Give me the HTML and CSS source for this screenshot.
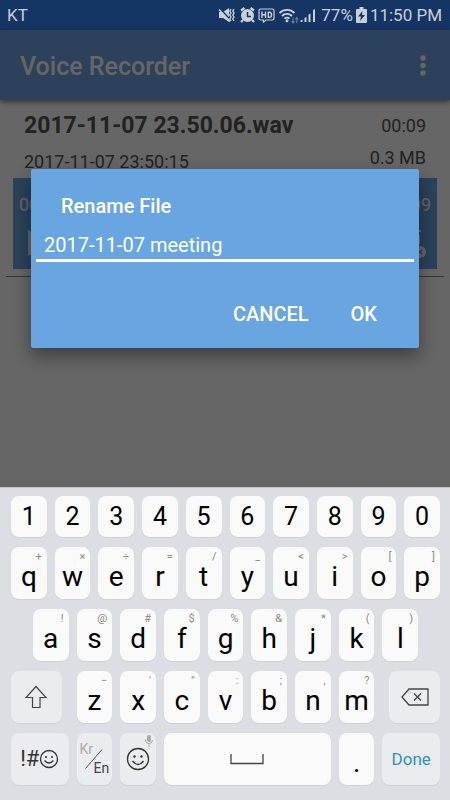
FILE: index.html
```html
<!DOCTYPE html>
<html lang="en">
<head>
<meta charset="utf-8">
<meta name="viewport" content="width=device-width, initial-scale=1">
<title>Voice Recorder</title>
<link rel="stylesheet" href="styles.css">
</head>
<body>
<div class="status">
  <span class="carrier">KT</span>
  <svg class="status-icons" width="102" height="20" viewBox="0 0 102 20" aria-hidden="true">
    <g fill="currentColor">
      <path d="M3 7h4l6-4v14l-6-4H3z"/>
      <circle cx="31.500" cy="10.500" r="6.500"/>
      <path d="M84.500 17v-1.500l2-1V17zM88.500 17v-4l2-1v5zM92.500 17V9.500l2-1V17zM97 17V5l2-1v13z"/>
    </g>
    <path d="M25 5.500l3.500-2.500M38 5.500L34.500 3M27 15l-2 2M36 15l2 2" stroke="currentColor" stroke-width="2.200"/>
    <path d="M4 3.500l11 12" stroke="#153564" stroke-width="1.500"/>
    <path d="M3 4.500l11 12" stroke="currentColor" stroke-width="1.500"/>
    <path d="M15 4l-1.200 2 1.200 2-1.200 2 1.200 2-1.200 2 1.200 2M18 4l-1.200 2 1.200 2-1.200 2 1.200 2-1.200 2 1.200 2" fill="none" stroke="currentColor" stroke-width="1.400"/>
    <path d="M31.500 7v4.500H35" fill="none" stroke="#153564" stroke-width="1.500"/>
    <g fill="none" stroke="currentColor" stroke-width="1.200">
      <path d="M44.500 4h12a1.500 1.500 0 0 1 1.500 1.500v8a1.500 1.500 0 0 1-1.500 1.500H50l-2.500 2v-2h-3a1.500 1.500 0 0 1-1.500-1.500v-8A1.500 1.500 0 0 1 44.500 4z"/>
      <path d="M46 6.500v6.500M49.500 6.500v6.500M46 9.700h3.500M52.300 7.200v5.200h1c3 0 3-5.200 0-5.200z" stroke-width="1.400"/>
      <path d="M63.500 8a10.500 10.500 0 0 1 15 0M66 11a7 7 0 0 1 10 0M68.500 13.700a3.500 3.500 0 0 1 5 0" stroke-width="1.900"/>
      <path d="M77 12.500v5M75.500 16l1.500 2 1.500-2M80.800 18v-5M79.300 14.500l1.500-2 1.500 2" opacity=".45"/>
    </g>
    <circle cx="71" cy="15.800" r="1.500" fill="currentColor"/>
  </svg>
  <span>77%</span>
  <svg class="battery" width="11" height="16" viewBox="0 0 11 16" aria-hidden="true">
    <path d="M3.500 0h4v2H10q1 0 1 1v12q0 1-1 1H1q-1 0-1-1V3q0-1 1-1h2.500z" fill="currentColor"/>
    <path d="M6.500 4L2 9.500h3L4 14l5-6H6z" fill="#153564"/>
  </svg>
  <span>11:50 PM</span>
</div>

<div class="app">
  <header class="toolbar">
    <h1>Voice Recorder</h1>
    <button class="more" type="button" aria-label="More options">
      <svg width="6" height="22" viewBox="0 0 6 22"><g fill="#fff"><circle cx="3" cy="3" r="2.700"/><circle cx="3" cy="10.500" r="2.700"/><circle cx="3" cy="18" r="2.700"/></g></svg>
    </button>
  </header>
  <main class="list">
    <article class="item">
      <div class="line"><h2>2017-11-07 23.50.06.wav</h2><span>00:09</span></div>
      <div class="line sub"><span class="date">2017-11-07 23:50:15</span><span>0.3 MB</span></div>
      <div class="player">
        <div class="times"><span>00:00</span><span>00:09</span></div>
        <div class="controls">
          <button type="button" aria-label="Play"><svg width="24" height="28" viewBox="0 0 24 28"><path d="M1 1l22 13L1 27z" fill="#fff"/></svg></button>
          <button type="button" aria-label="Delete"><svg width="30" height="30" viewBox="0 0 30 30"><path d="M4 2h21v2H4zM6 7h18v9l-6 5v6H6z" fill="#fff"/><circle cx="24" cy="24" r="6" fill="#fff"/><path d="M22 22l4 4M26 22l-4 4" stroke="#6ba5e1" stroke-width="1.500"/></svg></button>
        </div>
      </div>
    </article>
  </main>
  <div class="scrim">
    <form class="dialog" role="dialog" aria-labelledby="dialog-title">
      <label class="dialog-title" id="dialog-title" for="filename">Rename File</label>
      <input class="field" id="filename" type="text" value="2017-11-07 meeting">
      <div class="actions"><button type="button">CANCEL</button><button type="button">OK</button></div>
    </form>
  </div>
</div>

<div class="keyboard">
  <button class="key num" type="button">1</button><button class="key num" type="button">2</button><button class="key num" type="button">3</button><button class="key num" type="button">4</button><button class="key num" type="button">5</button><button class="key num" type="button">6</button><button class="key num" type="button">7</button><button class="key num" type="button">8</button><button class="key num" type="button">9</button><button class="key num" type="button">0</button>

  <button class="key" type="button"><small>+</small>q</button><button class="key" type="button"><small>×</small>w</button><button class="key" type="button"><small>÷</small>e</button><button class="key" type="button"><small>=</small>r</button><button class="key" type="button"><small>/</small>t</button><button class="key" type="button"><small>_</small>y</button><button class="key" type="button"><small>&lt;</small>u</button><button class="key" type="button"><small>&gt;</small>i</button><button class="key" type="button"><small>[</small>o</button><button class="key" type="button"><small>]</small>p</button>

  <button class="key home" type="button"><small>!</small>a</button><button class="key" type="button"><small>@</small>s</button><button class="key" type="button"><small>#</small>d</button><button class="key" type="button"><small>$</small>f</button><button class="key" type="button"><small>%</small>g</button><button class="key" type="button"><small>&amp;</small>h</button><button class="key" type="button"><small>*</small>j</button><button class="key" type="button"><small>(</small>k</button><button class="key" type="button"><small>)</small>l</button>

  <button class="key fn wide shift" type="button" aria-label="Shift">
    <svg width="22" height="24" viewBox="0 0 22 24"><path d="M11 1.500L21 12.500h-6v10H7.500v-10H1z" fill="none" stroke="#444" stroke-width="1.200"/></svg>
  </button>
  <button class="key" type="button"><small>−</small>z</button><button class="key" type="button"><small>'</small>x</button><button class="key" type="button"><small>"</small>c</button><button class="key" type="button"><small>:</small>v</button><button class="key" type="button"><small>;</small>b</button><button class="key" type="button"><small>,</small>n</button><button class="key" type="button"><small>?</small>m</button>
  <button class="key fn wide erase" type="button" aria-label="Backspace">
    <svg width="28" height="18" viewBox="0 0 28 18"><path d="M8 1h19v16H8L1 9z" fill="none" stroke="#444" stroke-width="1.300"/><path d="M13 5.500l7 7M20 5.500l-7 7" stroke="#444" stroke-width="1.300"/></svg>
  </button>

  <button class="key fn wide symbols" type="button" aria-label="Symbols">!#<svg width="20" height="20" viewBox="0 0 20 20"><g fill="none" stroke="#333" stroke-width="1.300"><circle cx="10" cy="10" r="8.500"/><path d="M5.500 11.500q4.500 5 9 0"/></g><circle cx="7" cy="8" r="1" fill="#333"/><circle cx="13" cy="8" r="1" fill="#333"/></svg></button>
  <button class="key fn lang" type="button"><span class="kr">Kr</span><svg width="18" height="20" viewBox="0 0 18 20" aria-hidden="true"><path d="M.5 19.500L17 .5" stroke="#555"/></svg><span class="en">En</span></button>
  <button class="key fn" type="button" aria-label="Emoji and voice input">
    <svg class="mic" width="8" height="12" viewBox="0 0 8 12"><rect x="2" y="0" width="4" height="7" rx="2" fill="#aaa"/><path d="M.5 5a3.500 3.500 0 0 0 7 0M4 8.500V12" fill="none" stroke="#aaa"/></svg>
    <svg width="24" height="24" viewBox="0 0 24 24"><g fill="none" stroke="#333" stroke-width="1.300"><circle cx="12" cy="12" r="10.500"/><path d="M6.500 14q5.500 7 11 0"/></g><circle cx="8.500" cy="9.500" r="1.200" fill="#333"/><circle cx="15.500" cy="9.500" r="1.200" fill="#333"/></svg>
  </button>
  <button class="key space" type="button" aria-label="Space"><svg width="34" height="11" viewBox="0 0 34 11"><path d="M1 0v9.500h32V0" fill="none" stroke="#444" stroke-width="1.300"/></svg></button>
  <button class="key" type="button">.</button>
  <button class="key fn wide done" type="button">Done</button>
</div>
</body>
</html>
```
FILE: styles.css
```css
* {
  box-sizing: border-box;
}

body {
  margin: 0;
  min-height: 100vh;
  display: flex;
  flex-direction: column;
  font-family: Roboto, sans-serif;
  background: #fff;
}

button {
  margin: 0;
  padding: 0;
  border: 0;
  background: none;
  color: inherit;
  font: inherit;
}

h1,
h2 {
  margin: 0;
}

svg {
  display: block;
  flex: none;
}

.status {
  display: flex;
  align-items: center;
  gap: 3px;
  height: 30px;
  padding: 0 8px 0 7px;
  background: #153564;
  color: #c8d0de;
  font-size: 17px;
}

.carrier {
  flex: 1;
}

.app {
  position: relative;
  flex: 1;
  display: flex;
  flex-direction: column;
}

.toolbar {
  display: flex;
  align-items: center;
  justify-content: space-between;
  height: 70px;
  padding: 2px 24px 0 20px;
  background: #6ba5e1;
  color: #fff;
  box-shadow: 0 2px 5px rgba(0, 0, 0, 0.5);
}

.toolbar h1 {
  font-size: 25px;
  font-weight: 500;
}

.list {
  flex: 1;
}

.item {
  margin: 0 6px;
  padding: 10px 7px 7px;
  border-bottom: 1px solid #888;
  color: #555;
}

.line {
  display: flex;
  align-items: center;
  justify-content: space-between;
  height: 32px;
  padding: 0 11px;
  font-size: 18px;
  line-height: 32px;
}

.line h2 {
  font-size: 23px;
  font-weight: 700;
}

.sub {
  align-items: flex-start;
  height: 36px;
}

.date {
  padding-top: 4px;
}

.player {
  height: 91px;
  padding: 14px 6px 0;
  background: #6ba5e1;
  color: #fff;
  font-size: 18px;
}

.times,
.controls {
  display: flex;
  align-items: center;
  justify-content: space-between;
}

.times {
  height: 24px;
}

.controls {
  padding: 12px 5px 0 8px;
}

.scrim {
  position: absolute;
  inset: 0;
  padding: 139px 31px 0;
  background: rgba(0, 0, 0, 0.6);
}

.dialog {
  padding: 24px 5px 14px;
  border-radius: 2px;
  background: #69a5e0;
  color: #fff;
  font-size: 20px;
  box-shadow: 0 8px 18px rgba(0, 0, 0, 0.4);
}

.dialog-title {
  display: block;
  padding: 0 25px;
  line-height: 26px;
  font-weight: 500;
}

.field {
  display: block;
  width: 100%;
  height: 43px;
  padding: 12px 8px 0;
  border: 0;
  border-bottom: 3px solid #fff;
  border-radius: 0;
  outline: 0;
  background: transparent;
  color: inherit;
  font: inherit;
}

.actions {
  display: flex;
  justify-content: flex-end;
  gap: 42px;
  padding: 32px 37px 0 0;
  font-weight: 500;
}

.actions button {
  height: 40px;
}

.keyboard {
  display: grid;
  grid-template-columns: repeat(20, 1fr);
  grid-template-rows: 41px repeat(4, 52px);
  gap: 10px 8px;
  padding: 8px 10px 15px 11px;
  border-top: 1px solid #c4c5c9;
  background: #dddee3;
}

.key {
  position: relative;
  grid-column: span 2;
  display: flex;
  justify-content: center;
  padding-top: 16px;
  border-radius: 8px;
  background: #fafafa;
  box-shadow: 0 1px 1px rgba(0, 0, 0, 0.06);
  color: #000;
  font-size: 28px;
  line-height: 28px;
}

.num {
  align-items: center;
  padding: 0;
  font-size: 25px;
}

.key small {
  position: absolute;
  top: 4px;
  right: 5px;
  color: #8a8a8a;
  font-size: 11px;
  line-height: 12px;
}

.home {
  grid-column: 2 / span 2;
}

.fn,
.space {
  align-items: center;
  padding: 0;
}

.fn {
  background: #ebecf0;
}

.wide {
  grid-column: span 3;
}

.shift {
  margin-right: 7px;
}

.erase {
  margin-left: 7px;
}

.symbols {
  color: #333;
  font-size: 22px;
}

.lang {
  font-size: 14px;
  line-height: 16px;
}

.kr,
.en {
  position: absolute;
}

.kr {
  top: 8px;
  left: 3px;
  color: #aaa;
}

.en {
  right: 3px;
  bottom: 9px;
  color: #444;
}

.mic {
  position: absolute;
  top: 2px;
  right: 3px;
}

.space {
  grid-column: span 8;
}

.done {
  color: #2b95b8;
  font-size: 17px;
}
```
